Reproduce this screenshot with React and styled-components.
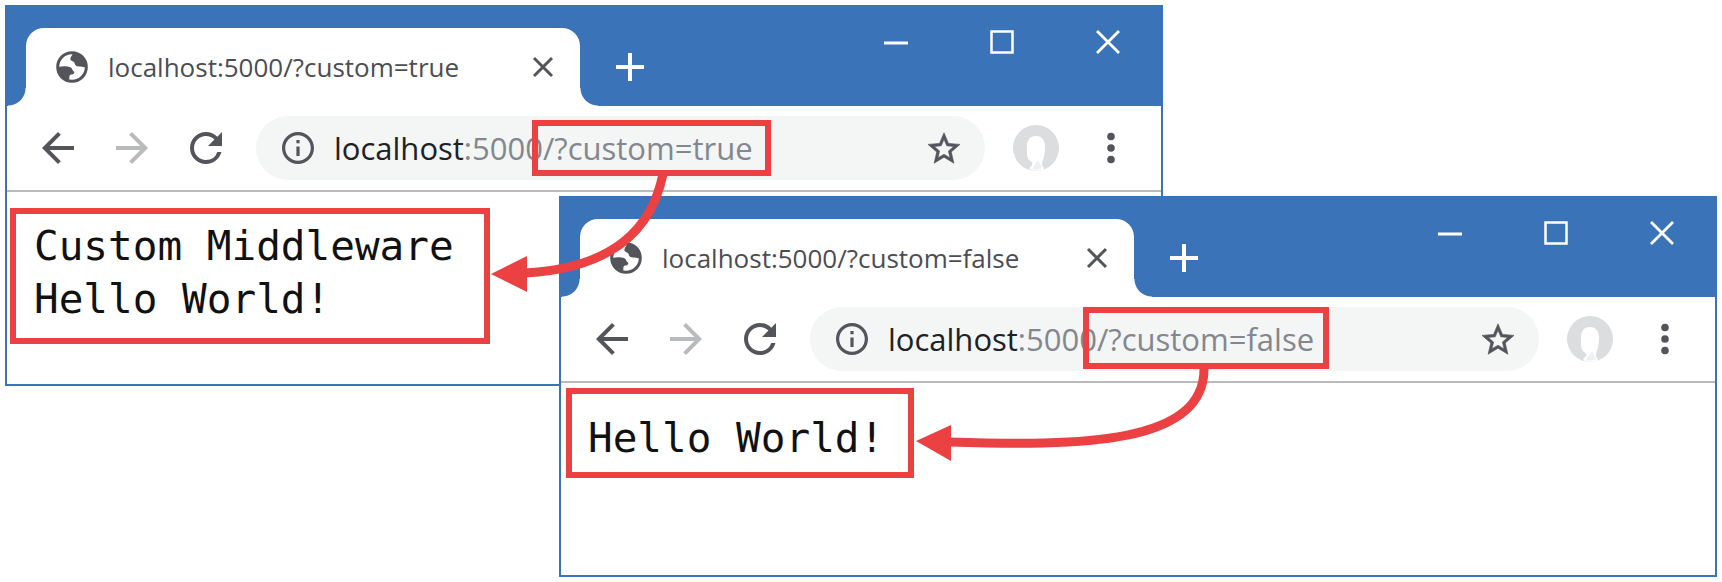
import React from "react";
import styled, { createGlobalStyle } from "styled-components";

const blue = "#3b73b8";
const red = "#ec4142";
const ink = "#54555b";

const GlobalStyle = createGlobalStyle`
  * { box-sizing: border-box; }
  body { margin: 0; background: #fff; }
  button, input { font: inherit; color: inherit; border: 0; padding: 0; background: none; }
  svg { display: block; }
`;

const Desktop = styled.main`
  position: relative;
  min-width: 1400px;
  min-height: 100vh;
  overflow: hidden;
  font-family: "Open Sans", "Noto Sans", sans-serif;
`;

const WindowFrame = styled.section`
  position: absolute;
  top: ${(p) => p.$top}px;
  left: ${(p) => p.$left}px;
  right: ${(p) => p.$right}px;
  min-height: 381px;
  border: 2px solid ${blue};
  background: #fff;
`;

const TitleBar = styled.header`
  display: flex;
  align-items: flex-start;
  height: 99px;
  padding-left: 19px;
  background: ${blue};
`;

const Tab = styled.div`
  position: relative;
  display: flex;
  align-items: center;
  width: 554px;
  height: 78px;
  margin-top: 21px;
  padding: 0 21px 0 30px;
  border-radius: 18px 18px 0 0;
  background: #fff;
  color: #4c4d54;
  font-size: 26px;
  line-height: 36px;

  &::before,
  &::after {
    content: "";
    position: absolute;
    bottom: 0;
    width: 18px;
    height: 18px;
  }
  &::before {
    right: 100%;
    background: radial-gradient(circle at 0 0, transparent 17px, #fff 18px);
  }
  &::after {
    left: 100%;
    background: radial-gradient(circle at 100% 0, transparent 17px, #fff 18px);
  }
`;

const TabTitle = styled.span`
  flex: 1;
  padding-left: 20px;
  white-space: nowrap;
`;

const IconButton = styled.button`
  flex: none;
  display: grid;
  place-items: center;
  width: ${(p) => p.$size || 32}px;
  height: ${(p) => p.$size || 32}px;
  color: ${(p) => p.$color || ink};
`;

const NewTab = styled(IconButton)`
  margin: 44px 0 0 34px;
`;

const WindowControls = styled.div`
  display: flex;
  gap: 74px;
  margin-left: auto;
  padding: 19px 37px 0 0;
`;

const Toolbar = styled.div`
  display: flex;
  align-items: center;
  height: 86px;
  padding: 0 34px 0 35px;
  border-bottom: 2px solid #bababa;
`;

const NavButtons = styled.nav`
  display: flex;
  gap: 42px;
  margin-right: 34px;
`;

const AddressBar = styled.form`
  flex: 1;
  display: flex;
  align-items: center;
  height: 64px;
  padding: 0 25px 0 26px;
  border-radius: 32px;
  background: #f4f5f5;
  font-size: 31px;
  line-height: 40px;
`;

const Host = styled.label`
  margin-left: 20px;
  color: #202124;
`;

const PathInput = styled.input`
  flex: 1;
  min-width: 0;
  height: 40px;
  color: #83878e;
  outline: none;
`;

const Avatar = styled(IconButton)`
  margin: 0 36px 0 28px;
`;

const UrlHighlight = styled.div`
  position: absolute;
  top: ${(p) => p.$top}px;
  left: ${(p) => p.$left}px;
  width: ${(p) => p.$width}px;
  height: ${(p) => p.$height}px;
  border: 6px solid ${red};
  pointer-events: none;
`;

const Page = styled.div`
  padding: ${(p) => p.$inset};
`;

const Output = styled.pre`
  width: ${(p) => p.$width}px;
  margin: 0;
  padding: ${(p) => p.$padding};
  border: 6px solid ${red};
  color: #111;
  font-family: "DejaVu Sans Mono", monospace;
  font-size: 41px;
  line-height: 53px;
`;

const Arrows = styled.svg`
  position: absolute;
  top: 0;
  left: 0;
  pointer-events: none;
`;

const Globe = () => (
  <svg width="32" height="32" viewBox="0 0 32 32">
    <circle cx="16" cy="16" r="14.3" fill="#fff" stroke={ink} strokeWidth="3" />
    <path
      fill={ink}
      d="M17 2c-1 3-3 4-2.500 6.500c.5 2 3.500 1.500 4 3.500c.5 2.500 2 3.500 4.500 3.500c3 0 4 1 7 .500C30 9 25 2 17 2z"
    />
    <path
      fill={ink}
      d="M2 16c4-1 9-1 12 0c2.500 1 2 3.500 4 4.500c1 1-.500 3-2.500 3c-2 0-2.500 2-2 6.500C6 28 2 23 2 16z"
    />
  </svg>
);

const Back = ({ flip }) => (
  <svg width="32" height="32" viewBox="4 4 16 16" fill="currentColor">
    <path
      d={
        flip
          ? "M4 11h12.170l-5.590-5.590L12 4l8 8-8 8-1.410-1.410L16.170 13H4z"
          : "M20 11H7.830l5.590-5.590L12 4l-8 8 8 8 1.410-1.410L7.830 13H20z"
      }
    />
  </svg>
);

const Reload = () => (
  <svg width="32" height="32" viewBox="4 4 16 16" fill="currentColor">
    <path d="M17.650 6.350A7.958 7.958 0 0 0 12 4c-4.420 0-7.990 3.580-7.990 8s3.570 8 7.990 8c3.730 0 6.840-2.550 7.730-6h-2.080A5.990 5.990 0 0 1 12 18c-3.310 0-6-2.690-6-6s2.690-6 6-6c1.660 0 3.140.69 4.220 1.780L13 11h7V4z" />
  </svg>
);

const Info = () => (
  <svg width="32" height="32" viewBox="2 2 20 20" fill="currentColor">
    <path d="M11 7h2v2h-2zm0 4h2v6h-2zm1-9C6.480 2 2 6.480 2 12s4.480 10 10 10 10-4.480 10-10S17.520 2 12 2zm0 18c-4.410 0-8-3.590-8-8s3.590-8 8-8 8 3.590 8 8-3.590 8-8 8z" />
  </svg>
);

const Star = () => (
  <svg width="32" height="32" viewBox="2 1.500 20 20" fill="currentColor" stroke="currentColor" strokeWidth="0.4">
    <path d="M22 9.240l-7.190-.62L12 2 9.190 8.630 2 9.240l5.460 4.730L5.820 21 12 17.270 18.180 21l-1.630-7.030zM12 15.400l-3.760 2.270 1-4.280-3.320-2.880 4.380-.38L12 6.100l1.710 4.040 4.380.38-3.320 2.880 1 4.280z" />
  </svg>
);

const Person = () => (
  <svg width="46" height="46" viewBox="0 0 46 46">
    <circle cx="23" cy="23" r="23" fill="#dcdddf" />
    <path
      fill="#fff"
      d="M23 11c-6 0-9 4-9 10v8c0 4 2 7 5 8.500c1 1 .5 3-2 4.500c-1.500 1 0 2.500 1 3c3 1 9 1 12 0l1-2c-2-1.500-2.500-4-1.500-7c1.500-3 2.500-8 2.500-14c0-7-3-11-9-11z"
    />
    <path fill="#eef0f4" d="M25 35l-6 9q5 2 10-1z" />
  </svg>
);

const Dots = () => (
  <svg width="32" height="32" viewBox="0 0 32 32" fill="currentColor">
    <circle cx="16" cy="4.500" r="3.800" />
    <circle cx="16" cy="16" r="3.800" />
    <circle cx="16" cy="27.500" r="3.800" />
  </svg>
);

const Stroke = ({ d, width }) => (
  <svg width="32" height="32" viewBox="0 0 32 32" fill="none" stroke="currentColor" strokeWidth={width}>
    <path d={d} />
  </svg>
);

function BrowserWindow({ id, query, frame, highlight, inset, output }) {
  return (
    <WindowFrame $top={frame.top} $left={frame.left} $right={frame.right}>
      <TitleBar>
        <Tab>
          <Globe />
          <TabTitle>localhost:5000{query}</TabTitle>
          <IconButton type="button" aria-label="Close tab">
            <Stroke d="M7 7l18 18M25 7L7 25" width={3} />
          </IconButton>
        </Tab>
        <NewTab type="button" aria-label="New tab" $color="#fff">
          <Stroke d="M16 2v28M2 16h28" width={4} />
        </NewTab>
        <WindowControls>
          <IconButton type="button" aria-label="Minimize" $color="#fff">
            <Stroke d="M4 17h24" width={3} />
          </IconButton>
          <IconButton type="button" aria-label="Maximize" $color="#fff">
            <Stroke d="M5.500 5.500h21v21h-21z" width={2.5} />
          </IconButton>
          <IconButton type="button" aria-label="Close window" $color="#fff">
            <Stroke d="M5 5l22 22M27 5L5 27" width={2.8} />
          </IconButton>
        </WindowControls>
      </TitleBar>
      <Toolbar>
        <NavButtons>
          <IconButton type="button" aria-label="Back">
            <Back />
          </IconButton>
          <IconButton type="button" aria-label="Forward" $color="#b9babb">
            <Back flip />
          </IconButton>
          <IconButton type="button" aria-label="Reload">
            <Reload />
          </IconButton>
        </NavButtons>
        <AddressBar>
          <IconButton type="button" aria-label="Site information">
            <Info />
          </IconButton>
          <Host htmlFor={id}>localhost</Host>
          <PathInput id={id} defaultValue={`:5000${query}`} spellCheck={false} />
          <IconButton type="button" aria-label="Bookmark">
            <Star />
          </IconButton>
        </AddressBar>
        <Avatar type="button" aria-label="Profile" $size={46}>
          <Person />
        </Avatar>
        <IconButton type="button" aria-label="Menu">
          <Dots />
        </IconButton>
      </Toolbar>
      <Page $inset={inset}>
        <Output $width={output.width} $padding={output.padding}>
          {output.text}
        </Output>
      </Page>
      <UrlHighlight
        $top={highlight.top}
        $left={highlight.left}
        $width={highlight.width}
        $height={highlight.height}
      />
    </WindowFrame>
  );
}

export default function App() {
  return (
    <Desktop>
      <GlobalStyle />
      <BrowserWindow
        id="address-true"
        query="/?custom=true"
        frame={{ top: 5, left: 5, right: 559 }}
        highlight={{ top: 113, left: 525, width: 239, height: 56 }}
        inset="16px 3px"
        output={{
          width: 480,
          padding: "6px 18px 12px",
          text: "Custom Middleware\nHello World!",
        }}
      />
      <BrowserWindow
        id="address-false"
        query="/?custom=false"
        frame={{ top: 196, left: 559, right: 5 }}
        highlight={{ top: 109, left: 522, width: 246, height: 62 }}
        inset="5px"
        output={{ width: 348, padding: "18px 16px 7px", text: "Hello World!" }}
      />
      <Arrows width="1400" height="582" viewBox="0 0 1400 582" aria-hidden="true">
        <g fill="none" stroke={red} strokeWidth="9">
          <path d="M663 174C652 228 615 268 525 273" />
          <path d="M1204 368C1205 445 1080 446 949 442" />
        </g>
        <g fill={red}>
          <path d="M491 274L527 256V292z" />
          <path d="M916 441L951 425V461z" />
        </g>
      </Arrows>
    </Desktop>
  );
}
